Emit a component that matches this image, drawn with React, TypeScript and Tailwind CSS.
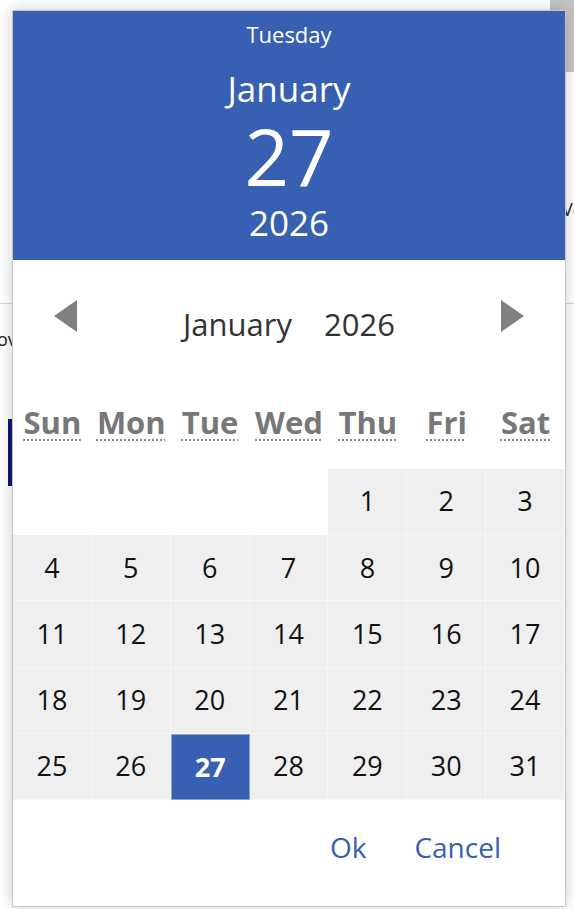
import React from 'react';

const weekDays = ['Sun', 'Mon', 'Tue', 'Wed', 'Thu', 'Fri', 'Sat'];

const Arrow = ({ dir }: { dir: 'left' | 'right' }) => (
  <button type="button" className="mb-[17px] w-[23px] h-[32px] blur-[0.6px]">
    <svg width="23" height="32" viewBox="0 0 23 32">
      <polygon
        points={dir === 'left' ? '23,0 23,32 0,16' : '0,0 0,32 23,16'}
        fill="#808080"
      />
    </svg>
  </button>
);

export default function App() {
  const cells: (number | null)[] = [
    null,
    null,
    null,
    null,
    ...Array.from({ length: 31 }, (_, i) => i + 1),
  ];
  const selected = 27;

  return (
    <div className="relative w-[574px] h-[909px] overflow-hidden bg-white font-['Open_Sans',sans-serif]">
      {/* page behind the dialog */}
      <div className="flex flex-col">
        <div className="h-[304px] border-b border-[#d6d6d6] flex flex-col">
          <div className="ml-auto w-[24px] h-[72px] bg-[#c4c4c4]" />
          <div className="mt-[125px] pl-[562px] text-[18px] leading-[24px] text-[#222] whitespace-nowrap">
            Ve
          </div>
        </div>
        <div className="mt-[23px] ml-[-3px] text-[18px] leading-[24px] text-[#222] whitespace-nowrap">
          ov
        </div>
        <div className="mt-[68px] ml-[8px] w-[4px] h-[67px] bg-[#0c1a70]" />
      </div>

      {/* dialog */}
      <div className="absolute left-[12px] top-[10px] w-[554px] h-[897px] border border-[#c6c6c6] bg-white flex flex-col shadow-[0_0_14px_rgba(0,0,0,0.2)]">
        {/* selected date header */}
        <div className="h-[249px] bg-[#3760b2] text-white flex flex-col items-center">
          <div className="mt-[8px] text-[22px] leading-[30px]">Tuesday</div>
          <div className="mt-[16px] text-[35px] leading-[48px]">January</div>
          <div className="text-[78px] leading-[86px]">27</div>
          <div className="text-[35px] leading-[48px]">2026</div>
        </div>

        {/* month navigation + weekdays */}
        <div className="h-[209px] flex flex-col">
          <div className="mt-[32px] h-[64px] flex items-center justify-between px-[41px]">
            <Arrow dir="left" />
            <div className="flex gap-[32px] text-[31px] leading-[40px] text-[#333]">
              <span>January</span>
              <span>2026</span>
            </div>
            <Arrow dir="right" />
          </div>
          <div className="mt-[44px] h-[44px] grid grid-cols-7">
            {weekDays.map((d) => (
              <div key={d} className="flex justify-center">
                <abbr
                  title={d}
                  className="text-[31px] leading-[44px] font-bold text-[#777] underline decoration-dotted decoration-2 decoration-[#8a8a8a] underline-offset-[5px]"
                >
                  {d}
                </abbr>
              </div>
            ))}
          </div>
        </div>

        {/* days grid */}
        <div className="h-[331px] grid grid-cols-7 grid-rows-5">
          {cells.map((day, i) =>
            day === null ? (
              <div key={i} className="bg-white" />
            ) : day === selected ? (
              <div
                key={i}
                className="flex items-center justify-center bg-[#3760b2] border border-[#86a2d8] text-[27px] font-bold text-white"
              >
                {day}
              </div>
            ) : (
              <div
                key={i}
                className="flex items-center justify-center bg-[#efefef] border-r border-b border-[#f6f6f6] text-[27px] text-[#111]"
              >
                {day}
              </div>
            )
          )}
        </div>

        {/* actions */}
        <div className="flex-1 flex justify-end items-start pt-[27px] pr-[42px]">
          <button type="button" className="mr-[4px] px-[22px] text-[28px] leading-[40px] text-[#3760b2]">
            Ok
          </button>
          <button type="button" className="px-[22px] text-[28px] leading-[40px] text-[#3760b2]">
            Cancel
          </button>
        </div>
      </div>
    </div>
  );
}
